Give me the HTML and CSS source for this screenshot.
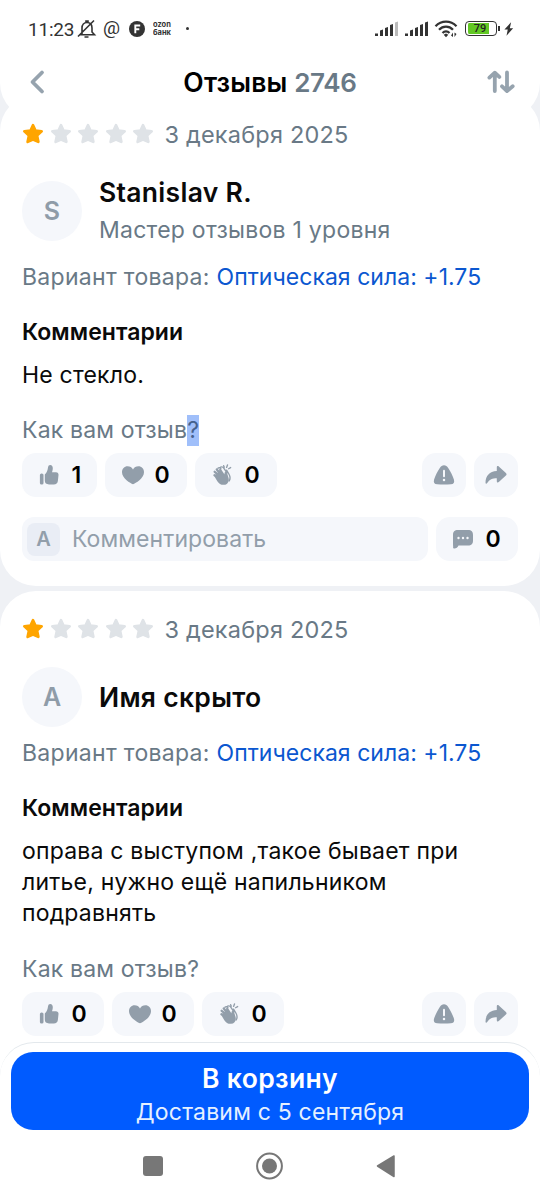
FILE: index.html
```
<!DOCTYPE html>
<html lang="ru">
<head>
<meta charset="utf-8">
<title>Отзывы</title>
<link rel="stylesheet" href="styles.css">
</head>
<body>
<svg class="defs" width="0" height="0">
  <symbol id="star" viewBox="0 0 22 22"><path d="M11 2.2 13.4 7.6 19.6 8.3 15 12.6 16.3 18.8 11 16.4 5.7 18.8 7 12.6 2.4 8.3 8.6 7.6Z" fill="currentColor" stroke="currentColor" stroke-width="2.8" stroke-linejoin="round"/></symbol>
  <symbol id="thumb" viewBox="0 0 22 22"><rect x="1.9" y="9.500" width="3.600" height="11" rx="1.600"/><path d="M6.800 10.600C9 8.600 9.600 6.400 10 3.600 10.200 1.800 11 1 12.200 1c1.800 0 2.600 1.500 2.600 3.200 0 1.500-.3 2.700-.8 4h3.900c1.800 0 2.800 1.100 2.600 2.900l-.6 5.600c-.3 2.500-1.700 3.700-4.100 3.700H11c-2.700 0-4.200-1.100-4.200-3.800z"/></symbol>
  <symbol id="heart" viewBox="0 0 24 22"><path d="M12 20.300C9.500 19.300 1 14.500 1 8.300 1 4.700 3.400 2.300 6.600 2.300c2.400 0 4.200 1.100 5.400 3.100 1.200-2 3-3.100 5.400-3.100 3.200 0 5.600 2.400 5.600 6 0 6.200-8.500 11-11 12z"/></symbol>
  <symbol id="clap" viewBox="0 0 22 24"><g fill="none" stroke="currentColor" stroke-linecap="round"><path stroke-width="2.5" d="M8.600 15 2.800 12.300M9 13.200 3 8.500M10 11.700 5.300 6M12.500 11.800 9 6.500"/><path stroke-width="1.500" d="M6.500 4.700c1.200-1 2.400-.7 3.300.4M9.500 3.500c1.300-.7 2.600-.3 3.600 1.200l3.300 5M16 6.700l2.500 4.200c1.700 3 1.600 5.500.3 7.600M13.500 3.500l-.7-1.700M16 3.700l1-2.600M18.200 5.200l2.200-1.300"/></g><path d="M2.200 12.600 4 11.500l6-2.500 3.200 2.400c.8-.5.3-1.900 1.200-2.600 1.100-.7 1.900.2 2.200 1.300l1.500 4.800c1.200 4-1 7.500-4.900 7.800-3 .3-5.500-1.300-7.300-4z"/></symbol>
  <symbol id="warn" viewBox="0 0 22 22"><path d="M11 1.300c1.800 0 3 .8 4.200 2.600 2.400 3.600 4.300 7.400 5.700 11.500.9 2.900-.3 4.600-3 4.900-4.500.4-9.300.4-13.800 0-2.700-.3-3.900-2-3-4.900 1.400-4.100 3.300-7.900 5.700-11.500C8 2.100 9.200 1.300 11 1.300z"/><path d="M11 6.800v5.400" stroke="#f5f7fb" stroke-width="2" stroke-linecap="round"/><circle cx="11" cy="15.900" r="1.250" fill="#f5f7fb"/></symbol>
  <symbol id="share" viewBox="0 0 24 22"><path d="M12.800 3.300c0-1.400 1.100-1.700 2-.9l7.100 6.500c.9.900.9 1.700 0 2.600l-7.100 6.600c-.9.800-2 .5-2-.9v-3c-4.200 0-7.500 1.200-9.600 4.900-.7 1.100-1.700.9-1.700-.4C1.600 11.500 5.500 7.400 12.800 6.900z"/></symbol>
  <symbol id="chat" viewBox="0 0 22 22"><path d="M6 2h10c3.500 0 5 1.500 5 5v5.500c0 3.500-1.500 5-5 5H6.500c-.8 2.300-2.800 3.200-4.500 3-1-.2-1-.8-.8-1.500C1 17.500 1 15 1 12.500V7c0-3.500 1.500-5 5-5z"/><g fill="#f5f7fb"><circle cx="6.500" cy="10" r="1.200"/><circle cx="11" cy="10" r="1.200"/><circle cx="15.500" cy="10" r="1.200"/></g></symbol>
</svg>
<div class="screen">
  <header class="top">
    <div class="status">
      <span class="time">11:23</span>
      <svg class="bell" width="20" height="20" viewBox="0 0 20 20" fill="none" stroke="#333" stroke-width="1.600"><path d="M5 15V9c0-3.500 2-5.500 5-5.500S15 5.500 15 9v4l2.500 2.700H3M9 3.500V2h2v1.500M1 17.500 17 1.500M7.500 18h4" /></svg>
      <span class="at">@</span>
      <svg class="fbadge" width="16" height="16" viewBox="0 0 16 16"><circle cx="8" cy="8" r="8" fill="#333"/><path d="M6.300 12.200V4.500h4.900M6.300 8.300h4" fill="none" stroke="#fff" stroke-width="1.900"/></svg>
      <span class="bank"><span>ozon</span><span>банк</span></span>
      <span class="dot"></span>
      <svg class="signals" width="85" height="20" viewBox="0 0 85 20" fill="#333">
        <path d="M1 15.500h3V18H1zM6 12.500l3-1V18H6zM11 10l3-1v9h-3zM16 7l3-1v12h-3z"/><path d="M21 4.500l3-1V18h-3z" fill="#bbb"/>
        <path d="M31 15.500h3V18h-3zM36 12.500l3-1V18h-3zM41 10l3-1v9h-3zM46 7l3-1v12h-3zM51 4.500l3-1V18h-3z"/>
        <g fill="none" stroke="#333" stroke-width="2.300"><path d="M61.500 8.200c6-6 15-6 21 0M65 11.700c4-4 10-4 14 0M68.500 15c2-2 5-2 7 0"/></g><path d="m69.700 16.700 2.300-1.200 2.300 1.200-2.300 2.500zM79 14.500v4.500l-2-1.500zM80.500 19v-4.500l2 1.500z"/>
      </svg>
      <span class="battery"><b>79</b></span>
      <svg class="bolt" width="12" height="18" viewBox="0 0 12 18"><path d="M8.500 1 .500 9.500h4L3 17l8-9H7z" fill="#333"/></svg>
    </div>
    <div class="nav">
      <svg width="24" height="30" viewBox="0 0 24 30" fill="none" stroke="#96a3ae" stroke-width="3.800" stroke-linecap="round" stroke-linejoin="round"><path d="M17 5.500 7.500 15l9.500 9.500"/></svg>
      <h1>Отзывы <span>2746</span></h1>
      <svg width="30" height="30" viewBox="0 0 30 30" fill="none" stroke="#96a3ae" stroke-width="3.800" stroke-linecap="round" stroke-linejoin="round"><path d="M8.800 24V6.500M3.400 10.600 8.800 5.700l4.500 4.200M21 5.500V23M16 19.300l5 4.700 5.700-4.700"/></svg>
    </div>
  </header>

  <main class="feed">
    <article class="card first">
      <div class="rating"><svg class="on"><use href="#star"/></svg><svg><use href="#star"/></svg><svg><use href="#star"/></svg><svg><use href="#star"/></svg><svg><use href="#star"/></svg><time>3 декабря 2025</time></div>
      <div class="person tall"><span class="avatar">S</span><div><div class="name">Stanislav R.</div><div class="level">Мастер отзывов 1 уровня</div></div></div>
      <p class="variant">Вариант товара: <a>Оптическая сила: +1.75</a></p>
      <h2>Комментарии</h2>
      <p class="text">Не стекло.</p>
      <p class="ask">Как вам отзыв<mark>?</mark></p>
      <div class="actions">
        <span class="pill one"><svg class="i-thumb"><use href="#thumb"/></svg>1</span>
        <span class="pill"><svg class="i-heart"><use href="#heart"/></svg>0</span>
        <span class="pill"><svg class="i-clap"><use href="#clap"/></svg>0</span>
        <span class="square push"><svg><use href="#warn"/></svg></span>
        <span class="square"><svg class="wide"><use href="#share"/></svg></span>
      </div>
      <div class="reply">
        <div class="field"><span class="mini">A</span><span class="hint">Комментировать</span></div>
        <span class="pill"><svg class="i-chat"><use href="#chat"/></svg>0</span>
      </div>
    </article>

    <article class="card second">
      <div class="rating"><svg class="on"><use href="#star"/></svg><svg><use href="#star"/></svg><svg><use href="#star"/></svg><svg><use href="#star"/></svg><svg><use href="#star"/></svg><time>3 декабря 2025</time></div>
      <div class="person"><span class="avatar">A</span><div class="name">Имя скрыто</div></div>
      <p class="variant">Вариант товара: <a>Оптическая сила: +1.75</a></p>
      <h2>Комментарии</h2>
      <p class="text">оправа с выступом ,такое бывает при<br>литье, нужно ещё напильником<br>подравнять</p>
      <p class="ask">Как вам отзыв?</p>
      <div class="actions">
        <span class="pill"><svg class="i-thumb"><use href="#thumb"/></svg>0</span>
        <span class="pill"><svg class="i-heart"><use href="#heart"/></svg>0</span>
        <span class="pill"><svg class="i-clap"><use href="#clap"/></svg>0</span>
        <span class="square push"><svg><use href="#warn"/></svg></span>
        <span class="square"><svg class="wide"><use href="#share"/></svg></span>
      </div>
    </article>
  </main>

  <footer class="buy">
    <div class="button"><strong>В корзину</strong><span>Доставим с 5 сентября</span></div>
  </footer>
  <div class="system">
    <svg width="540" height="70" viewBox="0 0 540 70" fill="#777"><rect x="143" y="26" width="20" height="20" rx="3"/><circle cx="269.500" cy="36" r="12.400" fill="none" stroke="#777" stroke-width="2"/><circle cx="269.500" cy="36" r="7.500"/><path d="M394 26v20.500L377.500 36z" stroke="#777" stroke-width="1.500" stroke-linejoin="round"/></svg>
  </div>
</div>
</body>
</html>
```
FILE: styles.css
```
* { box-sizing: border-box; }
body { margin: 0; background: #fff; font-family: Inter, "Noto Sans", sans-serif; }
h1, h2, p { margin: 0; }
.defs { display: block; height: 0; }
.screen { width: 540px; height: 1200px; display: flex; flex-direction: column; background: #fff; overflow: hidden; }
.top, .buy, .system { flex: none; }

.top { height: 119px; border-radius: 0 0 36px 36px; background: #fff; box-shadow: 0 0 0 40px #eff1f5; clip-path: inset(0); }
.status { height: 57px; padding: 0 0 0 28px; display: flex; align-items: center; color: #333; }
.time { width: 47px; padding-top: 2px; font: 19px/24px Roboto, sans-serif; letter-spacing: -.2px; }
.bell { margin-left: 2px; }
.at { width: 19px; margin-left: 6px; padding-bottom: 1px; font: 19px/20px Roboto, sans-serif; }
.fbadge { margin-left: 7px; }
.bank { width: 20px; margin-left: 8px; display: flex; flex-direction: column; font: 700 7.500px/8px Inter, sans-serif; }
.bank span { height: 8px; overflow: hidden; }
.dot { width: 3px; height: 3px; margin-left: 13px; border-radius: 50%; background: #333; }
.signals { flex: none; margin: 0 0 2px 185px; }
.battery { position: relative; flex: none; width: 32px; height: 15px; margin-left: 6px; padding: 1px 7px 1px 2px; border: 1.500px solid #333; border-radius: 4px; background: #62c824 content-box; text-align: center; }
.battery::after { content: ""; position: absolute; right: -4px; top: 4px; width: 2px; height: 5px; background: #333; }
.battery b { display: block; margin-right: -3px; font: 500 11px/11px Roboto, sans-serif; color: #222; }
.bolt { width: 10px; margin-left: 7px; }
.nav { height: 50px; padding: 0 24px 0 25px; display: flex; align-items: center; justify-content: space-between; }
h1 { padding-left: 5px; font-size: 26.500px; font-weight: 600; line-height: 32px; letter-spacing: .15px; }
h1 span { font-size: 26px; letter-spacing: -.3px; color: #697986; }

.feed { height: 947px; flex: none; margin-top: -24px; display: flex; flex-direction: column; gap: 5px; background: linear-gradient(#eff1f5 0 620px, #fff 620px); overflow: hidden; clip-path: inset(12px 0 0); }
.card { flex: none; padding: 24px 22px 25px; border-radius: 36px; background: #fff; }
.card.second { padding-top: 23px; padding-bottom: 6px; border-radius: 36px 36px 0 0; }
.rating { height: 30px; display: flex; align-items: center; gap: 5.600px; color: #dfe3e7; }
.rating svg { width: 22px; height: 22px; }
.rating .on { color: #ffa500; }
time { margin-left: 4.500px; font-size: 23.500px; letter-spacing: .2px; color: #697986; white-space: nowrap; }
.person { height: 60px; margin-top: 23px; display: flex; align-items: center; gap: 17px; }
.person.tall { height: 76px; margin-top: 24px; }
.avatar { width: 60px; height: 60px; border-radius: 50%; background: #f5f7fb; color: #8f9ca8; display: grid; place-items: center; font-size: 25px; font-weight: 600; }
.name { font-size: 26.500px; font-weight: 600; line-height: 38px; letter-spacing: .3px; color: #0a0a0a; }
.level { font-size: 23px; line-height: 38px; letter-spacing: .25px; color: #697986; }
.variant { margin-top: 11px; font-size: 23px; line-height: 30px; letter-spacing: .3px; color: #697986; white-space: nowrap; }
.first .variant { margin-top: 13px; }
.variant a { letter-spacing: .04px; color: #0b57d0; }
h2 { margin-top: 25px; font-size: 23px; font-weight: 600; line-height: 30px; letter-spacing: .05px; color: #0a0a0a; }
.text { margin-top: 13px; font-size: 23px; line-height: 31px; letter-spacing: .2px; color: #0a0a0a; white-space: nowrap; }
.ask { margin-top: 24px; font-size: 23px; line-height: 30px; letter-spacing: .18px; color: #697986; }
.second .ask { margin-top: 25px; }
mark { padding: 1px 0 2px; background: #a0bffa; color: #46618d; }
.actions { height: 44px; margin-top: 8px; display: flex; gap: 8px; }
.pill, .square { height: 44px; flex: none; display: flex; align-items: center; border-radius: 14px; background: #f5f7fb; }
.pill { width: 82px; padding-left: 16px; font-size: 23px; font-weight: 600; }
.pill.one { width: 75px; }
.pill svg { width: 22px; height: 22px; margin-right: 11.500px; fill: #929eaa; color: #929eaa; }
.pill .i-heart { width: 24px; margin-right: 9.500px; }
.square { width: 44px; justify-content: center; }
.square svg { width: 22px; height: 22px; fill: #929eaa; }
.square .wide { width: 24px; }
.push { margin-left: auto; }
.reply { height: 44px; margin-top: 20px; display: flex; gap: 8px; }
.field { flex: 1; display: flex; align-items: center; padding-left: 5px; border-radius: 12px; background: #f5f7fb; }
.mini { width: 33px; height: 33px; border-radius: 8px; background: #e9edf5; color: #929eaa; display: grid; place-items: center; font-size: 20px; font-weight: 600; }
.hint { margin-left: 12px; font-size: 23px; letter-spacing: .08px; color: #929eaa; }

.buy { height: 88px; padding: 9px 11px 0; border-top: 1.500px solid #e3e8ec; border-radius: 34px 34px 0 0; background: #fff; }
.button { height: 78px; padding-top: 9px; border-radius: 22px; background: #005bff; color: #fff; display: flex; flex-direction: column; align-items: center; }
.button strong { font-size: 26.500px; font-weight: 600; line-height: 34px; letter-spacing: .36px; }
.button span { font-size: 23px; line-height: 34px; letter-spacing: .2px; color: #e5f0ff; }
.system { height: 70px; }
```
